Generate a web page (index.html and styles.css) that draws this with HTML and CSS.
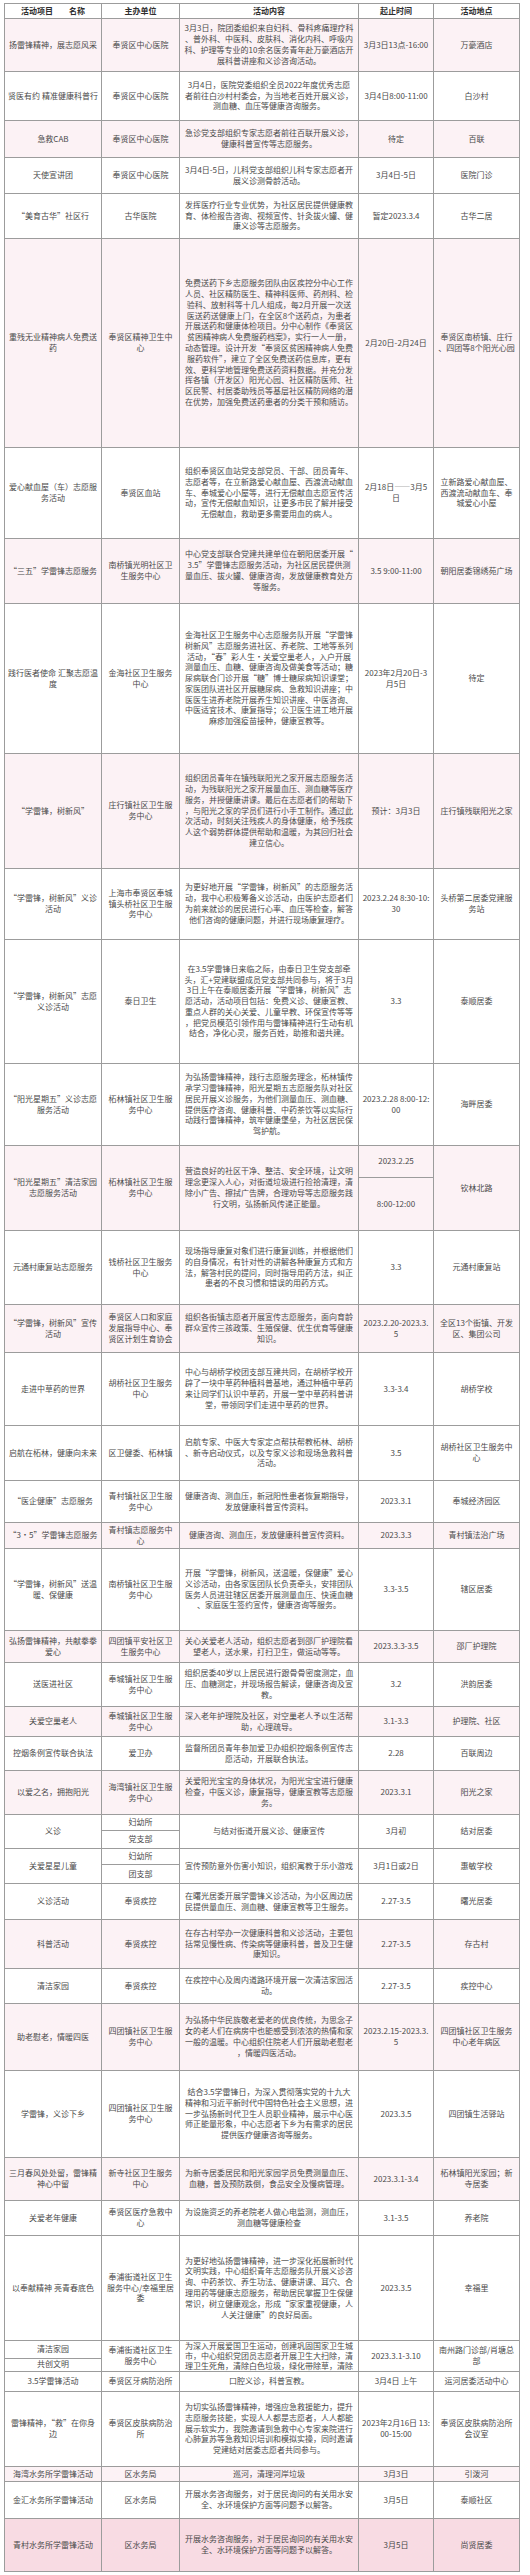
FILE: index.html
```html
<!DOCTYPE html>
<html lang="zh-CN">
<head>
<meta charset="utf-8">
<title>学雷锋志愿服务活动安排</title>
<link rel="stylesheet" href="styles.css">
</head>
<body>
<table class="sched">
<colgroup>
<col class="c1"><col class="c2"><col class="c3"><col class="c4"><col class="c5">
</colgroup>
<thead>
<tr class="h15"><th>活动项目　　名称</th><th>主办单位</th><th>活动内容</th><th>起止时间</th><th>活动地点</th></tr>
</thead>
<tbody>
<tr class="h53 pk"><td>扬雷锋精神，展志愿风采</td><td>奉贤区中心医院</td><td>3月3日，院团委组织来自妇科、骨科疼痛理疗科、普外科、中医科、皮肤科、消化内科、呼吸内科、护理等专业的10余名医务青年赴万豪酒店开展科普讲座和义诊咨询活动。</td><td>3月3日13点-16:00</td><td>万豪酒店</td></tr>
<tr class="h49"><td>贤医有约 精准健康科普行</td><td>奉贤区中心医院</td><td>3月4日，医院党委组织全员2022年度优秀志愿者前往白沙村村委会，为当地老百姓开展义诊，测血糖、血压等健康咨询服务。</td><td>3月4日8:00-11:00</td><td>白沙村</td></tr>
<tr class="h37 pk"><td>急救CAB</td><td>奉贤区中心医院</td><td>急诊党支部组织专家志愿者前往百联开展义诊，健康科普宣传等志愿服务。</td><td>待定</td><td>百联</td></tr>
<tr class="h36"><td>天使宣讲团</td><td>奉贤区中心医院</td><td>3月4日-5日，儿科党支部组织儿科专家志愿者开展义诊测骨龄活动。</td><td>3月4日-5日</td><td>医院门诊</td></tr>
<tr class="h45"><td>“美育古华”社区行</td><td>古华医院</td><td>发挥医疗行业专业优势，为社区居民提供健康教育、体检报告咨询、视频宣传、针灸拔火罐、健康义诊等志愿服务。</td><td>暂定2023.3.4</td><td>古华二居</td></tr>
<tr class="h209 pk"><td>重残无业精神病人免费送药</td><td>奉贤区精神卫生中心</td><td>免费送药下乡志愿服务团队由区疾控分中心工作人员、社区精防医生、精神科医师、药剂科、检验科、放射科等十几人组成，每2月开展一次送医送药送健康上门，在全区8个送药点，为患者开展送药和健康体检项目。分中心制作《奉贤区贫困精神病人免费服药档案》，实行一人一册，动态管理。设计开发“奉贤区贫困精神病人免费服药软件”，建立了全区免费送药信息库，更有效、更科学地管理免费送药资料数据。并充分发挥各镇（开发区）阳光心园、社区精防医师、社区民警、村居委助残员等基层社区精防网络的潜在优势，加强免费送药患者的分类干预和随访。</td><td>2月20日-2月24日</td><td>奉贤区南桥镇、庄行、四团等8个阳光心园</td></tr>
<tr class="h91"><td>爱心献血屋（车）志愿服务活动</td><td>奉贤区血站</td><td>组织奉贤区血站党支部党员、干部、团员青年、志愿者等，在立新路爱心献血屋、西渡流动献血车、奉城爱心小屋等，进行无偿献血志愿宣传活动，宣传无偿献血知识，让更多市民了解并接受无偿献血，救助更多需要用血的病人。</td><td>2月18日——3月5日</td><td>立新路爱心献血屋、西渡流动献血车、奉城爱心小屋</td></tr>
<tr class="h65 pk"><td>“三五”学雷锋志愿服务</td><td>南桥镇光明社区卫生服务中心</td><td>中心党支部联合党建共建单位在朝阳居委开展“3.5”学雷锋志愿服务活动，为社区居民提供测量血压、拔火罐、健康咨询，发放健康教育处方等服务。</td><td>3.5 9:00-11:00</td><td>朝阳居委锦绣苑广场</td></tr>
<tr class="h150"><td>践行医者使命 汇聚志愿温度</td><td>金海社区卫生服务中心</td><td>金海社区卫生服务中心志愿服务队开展“学雷锋树新风”志愿服务进社区、养老院、工地等系列活动，“春”彩人生•关爱空巢老人，入户开展测量血压、血糖、健康咨询及做美食等活动；糖尿病联合门诊开展“糖”博士糖尿病知识课堂；家医团队进社区开展糖尿病、急救知识讲座；中医医生进养老院开展养生知识讲座、中医咨询、中医适宜技术、康复指导；公卫医生进工地开展麻疹加强疫苗接种，健康宣教等。</td><td>2023年2月20日-3月5日</td><td>待定</td></tr>
<tr class="h115 pk"><td>“学雷锋，树新风”</td><td>庄行镇社区卫生服务中心</td><td>组织团员青年在镇残联阳光之家开展志愿服务活动，为残联阳光之家开展量血压、测血糖等医疗服务，并授健康讲课。最后在志愿者们的帮助下，与阳光之家的学员们进行小手工制作。通过此次活动，时刻关注残疾人的身体健康，给予残疾人这个弱势群体提供帮助和温暖，为其回归社会建立信心。</td><td>预计：3月3日</td><td>庄行镇残联阳光之家</td></tr>
<tr class="h71"><td>“学雷锋，树新风”义诊活动</td><td>上海市奉贤区奉城镇头桥社区卫生服务中心</td><td>为更好地开展“学雷锋，树新风”的志愿服务活动，我中心积极筹备义诊活动，由医护志愿者们为前来就诊的居民进行心率、血压等检查，解答他们咨询的健康问题，并进行现场康复理疗。</td><td>2023.2.24 8:30-10:30</td><td>头桥第二居委党建服务站</td></tr>
<tr class="h124"><td>“学雷锋，树新风”志愿义诊活动</td><td>泰日卫生</td><td>在3.5学雷锋日来临之际，由泰日卫生党支部牵头，汇+党建联盟成员党支部共同参与，将于3月3日上午在泰顺居委开展“学雷锋，树新风”志愿活动，活动项目包括：免费义诊、健康宣教、重点人群的关心关爱、儿童早教、环保宣传等等，把党员模范引领作用与雷锋精神进行生动有机结合，净化心灵，服务百姓，助推和谐共建。</td><td>3.3</td><td>泰顺居委</td></tr>
<tr class="h82"><td>“阳光星期五”义诊志愿服务活动</td><td>柘林镇社区卫生服务中心</td><td>为弘扬雷锋精神，践行志愿服务理念，柘林镇传承学习雷锋精神，阳光星期五志愿服务队对社区居民开展义诊服务，为他们测量血压、测血糖、提供医疗咨询、健康科普、中药茶饮等以实际行动践行雷锋精神，筑牢健康堡垒，为社区居民保驾护航。</td><td>2023.2.28 8:00-12:00</td><td>海畔居委</td></tr>
<tr class="h32 pk"><td rowspan="2">“阳光星期五”清洁家园志愿服务活动</td><td rowspan="2">柘林镇社区卫生服务中心</td><td rowspan="2">营造良好的社区干净、整洁、安全环境，让文明理念更深入人心，对街道垃圾进行捡拾清理，清除小广告、擦拭广告牌，合理劝导等志愿服务践行文明，弘扬新风传递正能量。</td><td>2023.2.25</td><td rowspan="2">钦林北路</td></tr>
<tr class="h53 pk"><td>8:00-12:00</td></tr>
<tr class="h74"><td>元通村康复站志愿服务</td><td>钱桥社区卫生服务中心</td><td>现场指导康复对象们进行康复训练，并根据他们的自身情况，有针对性的讲解各种康复方式和方法，解答村民的提问，同时指导用药方法，纠正患者的不良习惯和错误的用药方式。</td><td>3.3</td><td>元通村康复站</td></tr>
<tr class="h48 pk"><td>“学雷锋，树新风”宣传活动</td><td>奉贤区人口和家庭发展指导中心、奉贤区计划生育协会</td><td>组织各街镇志愿者开展宣传志愿服务，面向育龄群众宣传三孩政策、生殖保健、优生优育等健康知识。</td><td>2023.2.20-2023.3.5</td><td>全区13个街镇、开发区、集团公司</td></tr>
<tr class="h73"><td>走进中草药的世界</td><td>胡桥社区卫生服务中心</td><td>中心与胡桥学校团支部互建共同，在胡桥学校开辟了一块中草药种植科普基地，通过种植中草药来让同学们认识中草药，开展一堂中草药科普讲堂，带领同学们走进中草药的世界。</td><td>3.3-3.4</td><td>胡桥学校</td></tr>
<tr class="h55"><td>启航在柘林，健康向未来</td><td>区卫健委、柘林镇</td><td>启航专家、中医大专家定点帮扶帮教柘林、胡桥、新寺启动仪式，以及专家义诊和现场急救科普活动。</td><td>3.5</td><td>胡桥社区卫生服务中心</td></tr>
<tr class="h42"><td>“医企健康”志愿服务</td><td>青村镇社区卫生服务中心</td><td>健康咨询、测血压，新冠阳性患者恢复期指导，发放健康科普宣传资料。</td><td>2023.3.1</td><td>奉城经济园区</td></tr>
<tr class="h26 pk"><td>“3·5”学雷锋志愿服务</td><td>青村镇志愿服务中心</td><td>健康咨询、测血压，发放健康科普宣传资料。</td><td>2023.3.3</td><td>青村镇法治广场</td></tr>
<tr class="h82"><td>“学雷锋，树新风”送温暖、保健康</td><td>南桥镇社区卫生服务中心</td><td>开展“学雷锋，树新风，送温暖，保健康”爱心义诊活动，由各家医团队长负责牵头，安排团队医务人员进驻辖区居委开展测量血压、快速血糖、家庭医生签约宣传，健康咨询等服务。</td><td>3.3-3.5</td><td>辖区居委</td></tr>
<tr class="h32 pk"><td>弘扬雷锋精神，共献拳拳爱心</td><td>四团镇平安社区卫生服务中心</td><td>关心关爱老人活动，组织志愿者到邵厂护理院看望老人，送水果，打扫卫生，做运动等等。</td><td>2023.3.3-3.5</td><td>邵厂护理院</td></tr>
<tr class="h44"><td>送医进社区</td><td>奉城镇社区卫生服务中心</td><td>组织居委40岁以上居民进行跟骨骨密度测定，血压、血糖测定，并现场报告解读，健康咨询及宣教。</td><td>3.2</td><td>洪韵居委</td></tr>
<tr class="h30 pk"><td>关爱空巢老人</td><td>奉城镇社区卫生服务中心</td><td>深入老年护理院及社区，对空巢老人予以生活帮助，心理疏导。</td><td>3.1-3.3</td><td>护理院、社区</td></tr>
<tr class="h34"><td>控烟条例宣传联合执法</td><td>爱卫办</td><td>监督所团员青年参加爱卫办组织控烟条例宣传志愿活动，开展联合执法。</td><td>2.28</td><td>百联周边</td></tr>
<tr class="h44 pk"><td>以爱之名，拥抱阳光</td><td>海湾镇社区卫生服务中心</td><td>关爱阳光宝宝的身体状况，为阳光宝宝进行健康检查，中医义诊，康复指导，健康宣教等志愿服务。</td><td>2023.3.1</td><td>阳光之家</td></tr>
<tr class="h16"><td rowspan="2">义诊</td><td>妇幼所</td><td rowspan="2">与结对街道开展义诊、健康宣传</td><td rowspan="2">3月初</td><td rowspan="2">结对居委</td></tr>
<tr class="h18"><td>党支部</td></tr>
<tr class="h16"><td rowspan="2">关爱星星儿童</td><td>妇幼所</td><td rowspan="2">宣传预防意外伤害小知识，组织寓教于乐小游戏</td><td rowspan="2">3月1日或2日</td><td rowspan="2">惠敏学校</td></tr>
<tr class="h19"><td>团支部</td></tr>
<tr class="h36"><td>义诊活动</td><td>奉贤疾控</td><td>在曙光居委开展学雷锋义诊活动，为小区周边居民提供量血压、测血糖、健康宣教等卫生服务。</td><td>2.27-3.5</td><td>曙光居委</td></tr>
<tr class="h49 pk"><td>科普活动</td><td>奉贤疾控</td><td>在存古村举办一次健康科普和义诊活动，主要包括常见慢性病、传染病等健康科普，普及卫生健康知识。</td><td>2.27-3.5</td><td>存古村</td></tr>
<tr class="h35"><td>清洁家园</td><td>奉贤疾控</td><td>在疾控中心及周内道路环境开展一次清洁家园活动。</td><td>2.27-3.5</td><td>疾控中心</td></tr>
<tr class="h67 pk"><td>助老慰老，情暖四医</td><td>四团镇社区卫生服务中心</td><td>为弘扬中华民族敬老爱老的优良传统，为思念子女的老人们在病房中也能感受到浓浓的热情和家一般的温暖。中心组织住院老人们开展助老慰老，情暖四医活动。</td><td>2023.2.15-2023.3.5</td><td>四团镇社区卫生服务中心老年病区</td></tr>
<tr class="h87"><td>学雷锋，义诊下乡</td><td>四团镇社区卫生服务中心</td><td>结合3.5学雷锋日，为深入贯彻落实党的十九大精神和习近平新时代中国特色社会主义思想，进一步弘扬新时代卫生人员职业精神，展示中心医师正能量形象，中心志愿者下乡为有需求的居民提供医疗健康咨询等服务。</td><td>2023.3.5</td><td>四团镇生活驿站</td></tr>
<tr class="h43 pk"><td>三月春风处处留，雷锋精神心中留</td><td>新寺社区卫生服务中心</td><td>为新寺居委居民和阳光家园学员免费测量血压、血糖，普及预防跌倒，食品安全及慢病管理。</td><td>2023.3.1-3.4</td><td>柘林镇阳光家园；新寺居委</td></tr>
<tr class="h35"><td>关爱老年健康</td><td>奉贤区医疗急救中心</td><td>为设施资乏的养老院老人做心电监测，测血压，测血糖等健康检查</td><td>3.1-3.5</td><td>养老院</td></tr>
<tr class="h105"><td>以奉献精神 亮青春底色</td><td>奉浦街道社区卫生服务中心/幸福里居委</td><td>为更好地弘扬雷锋精神，进一步深化拓展新时代文明实践，中心组织青年志愿服务队开展义诊咨询、中药茶饮、养生功法、健康讲课、耳穴、合理用药等健康志愿服务，帮助居民掌握卫生保健常识，树立健康观念，形成“家家重视健康，人人关注健康”的良好局面。</td><td>2023.3.5</td><td>幸福里</td></tr>
<tr class="h17"><td>清洁家园</td><td rowspan="2">奉浦街道社区卫生服务中心</td><td rowspan="2"><div class="clip">为深入开展爱国卫生运动，创建巩固国家卫生城市，中心组织党团员志愿者开展卫生大扫除，清理卫生死角，清除白色垃圾，绿化带除草，清除</div></td><td rowspan="2">2023.3.1-3.10</td><td rowspan="2">南州路门诊部/肖塘总部</td></tr>
<tr class="h13"><td>共创文明</td></tr>
<tr class="h20"><td>3.5学雷锋活动</td><td>奉贤区牙病防治所</td><td>口腔义诊，科普宣教。</td><td>3月4日 上午</td><td>运河居委活动中心</td></tr>
<tr class="h75"><td>雷锋精神，“救”在你身边</td><td>奉贤区皮肤病防治所</td><td>为切实弘扬雷锋精神，增强应急救援能力，提升志愿服务技能，实现人人都是志愿者，人人都能展示软实力，我院邀请到急救中心专家来院进行心肺复苏等急救知识培训和模拟实操，同时邀请党建结对居委志愿者共同参与。</td><td>2023年2月16日 13:00-15:00</td><td>奉贤区皮肤病防治所会议室</td></tr>
<tr class="h15 pk"><td>海湾水务所学雷锋活动</td><td>区水务局</td><td>巡河，清理河岸垃圾</td><td>3月3日</td><td>引泼河</td></tr>
<tr class="h37"><td>金汇水务所学雷锋活动</td><td>区水务局</td><td>开展水务咨询服务，对于居民询问的有关用水安全、水环境保护方面等问题予以解答。</td><td>3月5日</td><td>泰顺社区</td></tr>
<tr class="h53 deep"><td>青村水务所学雷锋活动</td><td>区水务局</td><td>开展水务咨询服务，对于居民询问的有关用水安全、水环境保护方面等问题予以解答。</td><td>3月5日</td><td>尚贤居委</td></tr>
</tbody>
</table>
</body>
</html>
```

FILE: styles.css
```css
html, body {
  margin: 0;
  padding: 0;
  background: #ffffff;
}

body {
  font-family: "Noto Sans CJK SC", "Noto Sans", sans-serif;
  color: #4a4a4a;
}

.sched {
  border-collapse: collapse;
  table-layout: fixed;
  width: 515px;
  margin: 3px 0 0 4px;
  font-size: 8px;
  line-height: 10.8px;
}

.c1 { width: 97px; }
.c2 { width: 78px; }
.c3 { width: 179px; }
.c4 { width: 75px; }
.c5 { width: 86px; }

.sched th,
.sched td {
  border: 1px solid #9c9c9c;
  text-align: center;
  vertical-align: middle;
  padding: 0 3px;
  line-break: anywhere;
  word-break: break-all;
}

.sched td:nth-child(3) { padding: 0 4px; }

.sched th {
  font-weight: 700;
  color: #2e2e2e;
}

.pk { background: #fcf2f5; }
.deep { background: #f8dbe3; }

.clip {
  height: 30px;
  overflow: hidden;
  line-height: 10px;
}

.h13 { height: 13px; }
.h15 { height: 15px; }
.h16 { height: 16px; }
.h17 { height: 17px; }
.h18 { height: 18px; }
.h19 { height: 19px; }
.h20 { height: 20px; }
.h26 { height: 26px; }
.h30 { height: 30px; }
.h32 { height: 32px; }
.h34 { height: 34px; }
.h35 { height: 35px; }
.h36 { height: 36px; }
.h37 { height: 37px; }
.h42 { height: 42px; }
.h43 { height: 43px; }
.h44 { height: 44px; }
.h45 { height: 45px; }
.h48 { height: 48px; }
.h49 { height: 49px; }
.h53 { height: 53px; }
.h55 { height: 55px; }
.h65 { height: 65px; }
.h67 { height: 67px; }
.h71 { height: 71px; }
.h73 { height: 73px; }
.h74 { height: 74px; }
.h75 { height: 75px; }
.h82 { height: 82px; }
.h87 { height: 87px; }
.h91 { height: 91px; }
.h105 { height: 105px; }
.h115 { height: 115px; }
.h124 { height: 124px; }
.h150 { height: 150px; }
.h209 { height: 209px; }
```
